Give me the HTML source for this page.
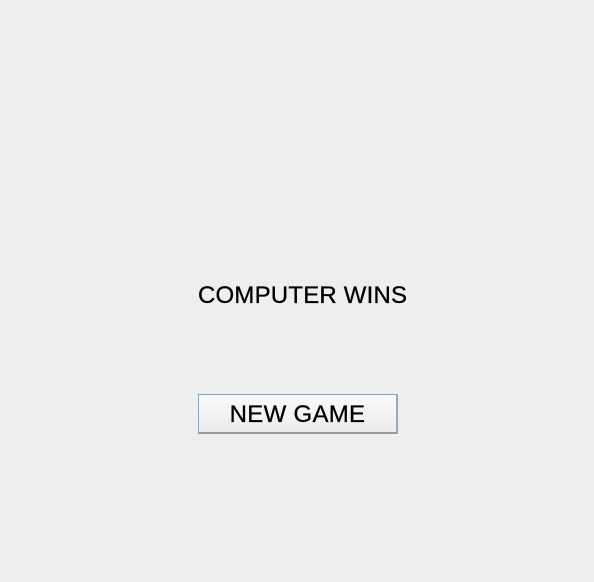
<!DOCTYPE html>
<html><head><style>
html,body{margin:0;padding:0;width:594px;height:582px;background:#eeeeee;overflow:hidden;font-family:"Liberation Sans",sans-serif;}
.t{position:absolute;left:198px;top:281px;font-size:24px;line-height:30px;color:#000;white-space:nowrap;letter-spacing:0.2px;-webkit-text-stroke:0.3px #000;}
.b{position:absolute;left:198px;top:394px;width:200px;height:40px;box-sizing:border-box;border:1px solid #7fa7d6;border-bottom:2px solid #9a9a9a;border-right:2px solid #9aa8b8;background:linear-gradient(#fafafa,#ececec);}
.b span{position:absolute;left:0;right:0;top:5px;text-align:center;font-size:24px;line-height:30px;color:#000;letter-spacing:0.3px;-webkit-text-stroke:0.3px #000;}
</style></head><body>
<div class="t">COMPUTER WINS</div>
<div class="b"><span>NEW GAME</span></div>
</body></html>
